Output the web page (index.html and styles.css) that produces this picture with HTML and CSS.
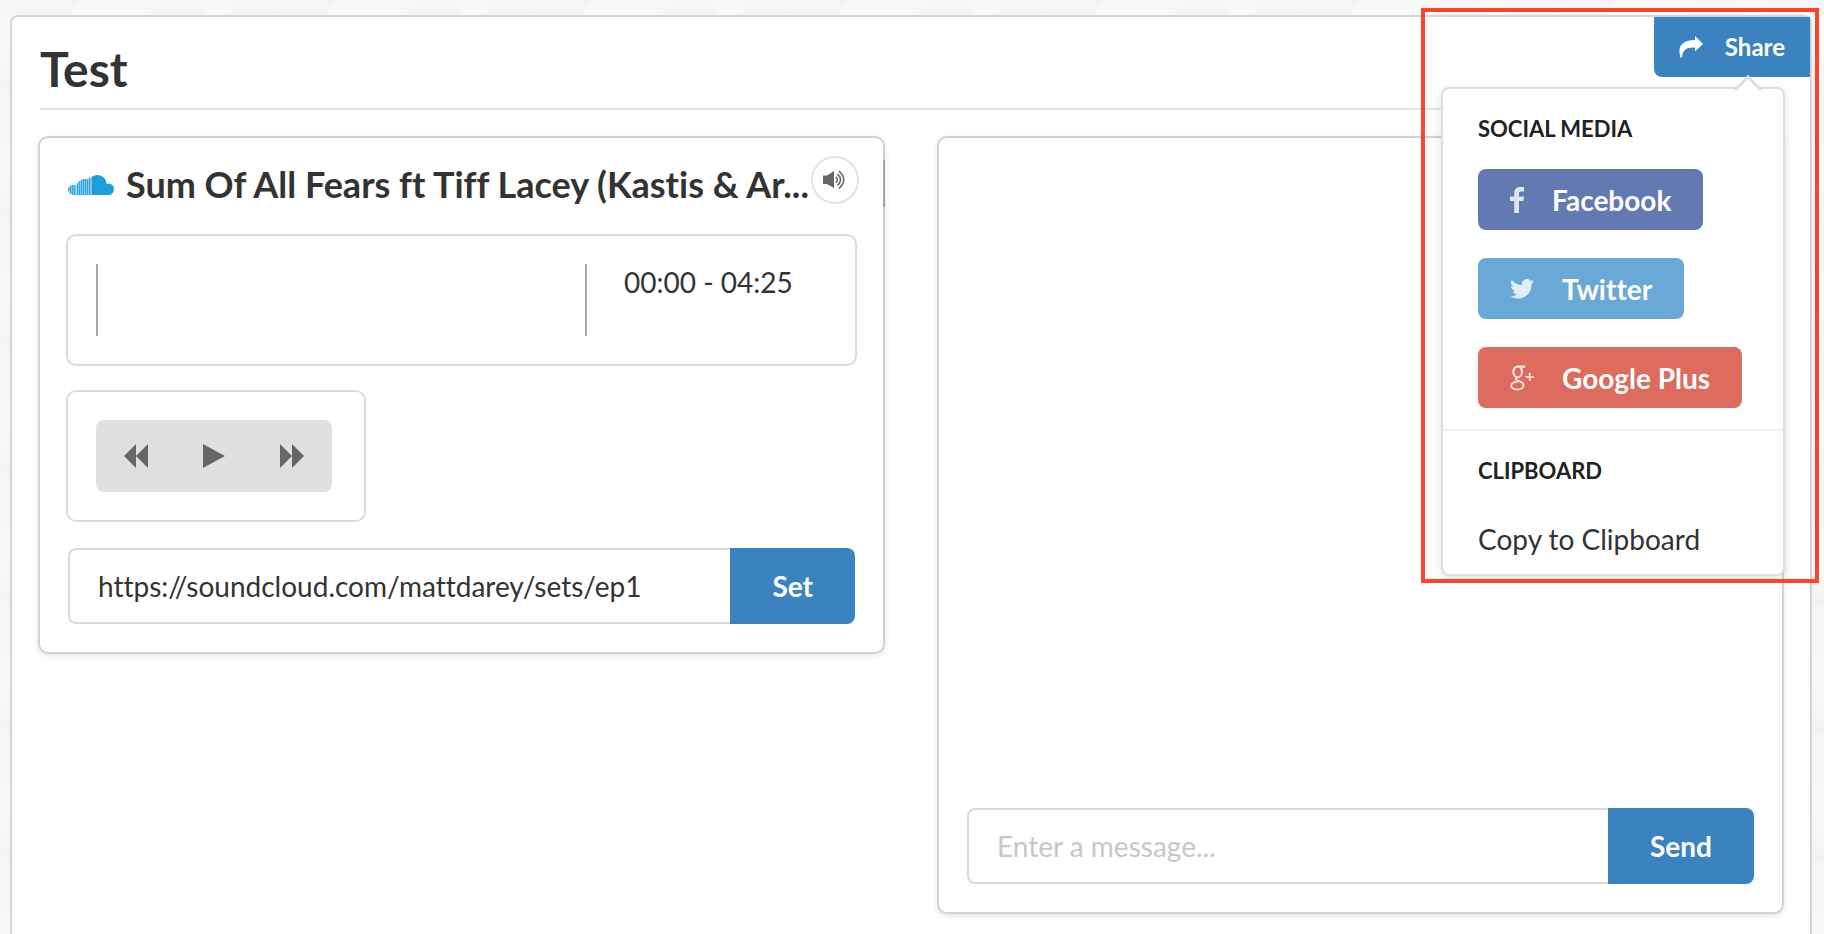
FILE: index.html
```html
<!DOCTYPE html>
<html lang="en">
<head>
<meta charset="utf-8">
<title>Test</title>
<link rel="stylesheet" href="styles.css">
</head>
<body>
<svg class="backdrop" aria-hidden="true">
  <defs>
    <linearGradient id="scale" x1="0" y1="0" x2="0" y2="1">
      <stop offset="0.4" stop-color="#f9f9f9"/>
      <stop offset="1" stop-color="#f2f2f2"/>
    </linearGradient>
    <linearGradient id="petal" x1="0" y1="0" x2="0" y2="1">
      <stop offset="0.5" stop-color="#f6f6f6"/>
      <stop offset="1" stop-color="#fafafa"/>
    </linearGradient>
    <pattern id="scales" width="256" height="128" patternUnits="userSpaceOnUse">
      <rect width="256" height="128" fill="#f5f5f5"/>
      <circle cx="108" cy="32" r="42" fill="url(#scale)"/>
      <circle cx="20" cy="54" r="40" fill="url(#scale)"/>
      <circle cx="222" cy="60" r="34" fill="url(#scale)"/>
      <circle cx="180" cy="76" r="40" fill="url(#scale)"/>
      <circle cx="90" cy="94" r="34" fill="url(#scale)"/>
      <ellipse cx="137" cy="-4" rx="24" ry="22" fill="url(#petal)"/>
      <ellipse cx="218" cy="-4" rx="18" ry="22" fill="url(#petal)"/>
    </pattern>
  </defs>
  <rect width="100%" height="100%" fill="url(#scales)"/>
</svg>
<main class="room">
  <header class="room-header">
    <h1 class="room-title">Test</h1>
    <div class="share">
      <button class="share-button" type="button" aria-expanded="true">
        <svg class="icon-share" viewBox="0 0 24 22" aria-hidden="true"><path d="M16 0 24 8 16 15.500V11.500C8 11 3.500 13.500 3 21.500H1.500C-2 10.500 3 4 16 4Z"/></svg>
        Share
      </button>
      <div class="popup">
        <section class="popup-section">
          <h2 class="popup-title">SOCIAL MEDIA</h2>
          <button class="social facebook" type="button">
            <svg class="icon-facebook" viewBox="0 0 14 26" aria-hidden="true"><path d="M14 0V4.500H11C9.500 4.500 9 5.200 9 6.500V9.500H14L13.400 14H9V26H4.200V14H0V9.500H4.200V6C4.200 2.200 6.500 0 10.300 0Z"/></svg>
            Facebook
          </button>
          <button class="social twitter" type="button">
            <svg class="icon-wide" viewBox="0 0 24 20" aria-hidden="true"><path d="M24 2.400c-.9.400-1.800.7-2.800.8 1-.6 1.800-1.600 2.200-2.700-1 .6-2 1-3.100 1.200A4.900 4.900 0 0 0 11.900 6.200C7.800 6 4.200 4 1.700 1 .4 3.200 1.100 6.100 3.200 7.500c-.8 0-1.600-.2-2.200-.6 0 2.300 1.600 4.400 3.900 4.900-.7.200-1.500.2-2.200.1.600 2 2.400 3.400 4.600 3.400A9.900 9.900 0 0 1 0 17.300C8.400 22.600 21.500 18.200 21.500 5.500v-.6c1-.7 1.800-1.600 2.500-2.500Z"/></svg>
            Twitter
          </button>
          <button class="social google" type="button">
            <svg class="icon-google" viewBox="0 0 25 26" aria-hidden="true"><g fill="none" stroke="currentColor"><ellipse cx="8" cy="6.700" rx="4.500" ry="5.500" stroke-width="2.200"/><path d="M8 .8H16L12 2.500" stroke-width="1.400"/><path d="M8 12.200C4.500 14 6 15.300 10 16.500 16 18.300 15 25 7.500 25-1 25-1 17.200 8.500 16.700" stroke-width="1.900"/><path d="M13.800 18.500Q15 21.500 12.500 23.500" stroke-width="1.600"/><path d="M16 11.800H25M20.500 7.500V16.200" stroke-width="1.700"/></g></svg>
            Google Plus
          </button>
        </section>
        <section class="popup-section clipboard">
          <h2 class="popup-title">CLIPBOARD</h2>
          <button class="copy" type="button">Copy to Clipboard</button>
        </section>
      </div>
    </div>
  </header>
  <div class="columns">
    <section class="card player">
      <div class="track">
        <svg class="icon-cloud" viewBox="0 0 46 20" aria-hidden="true">
          <path d="M23.500 1.800Q28-.8 32.500.5 38 2.500 38.500 8.800 46 7.800 46 14.200 45.500 20 40 20H23.500Z"/>
          <g fill="none" stroke="currentColor" stroke-width="1.200"><path d="M.7 12.500v4M2.700 10.500v8.500M4.700 10v9.700M6.700 10v10M9.700 8V20M11.700 6V20M13.700 5V20M15.700 4V20M17.700 4V20M19.700 4.500V20M21.700 2.500V20"/></g>
          <path d="M0 12.500 3 10.200H8L10 7 14 4H19L23.500 1.800V20H4Q0 18.500 0 15Z" opacity=".35"/>
        </svg>
        <h2 class="track-title">Sum Of All Fears ft Tiff Lacey (Kastis &amp; Ar...</h2>
        <button class="volume" type="button" aria-label="Volume">
          <svg class="icon-volume" viewBox="0 0 24 20" aria-hidden="true"><path d="M0 5.500H4L11 1V18L4 14H0Z"/><g fill="none" stroke="currentColor" stroke-width="1.600"><path d="M12.800 6.800Q16 9.700 12.800 12.700M14.500 4.200Q20.700 9.700 14.500 15.400M16 1.200Q25.500 9.700 16 18.500"/></g></svg>
        </button>
      </div>
      <div class="box progress">
        <div class="wave"></div>
        <span class="time">00:00 - 04:25</span>
      </div>
      <div class="box controls">
        <div class="control-group">
          <button class="control" type="button" aria-label="Previous"><svg class="icon-control" viewBox="0 0 24 24" aria-hidden="true"><path d="M12 0V24L0 12ZM24 0V24L12 12Z"/></svg></button>
          <button class="control" type="button" aria-label="Play"><svg class="icon-control" viewBox="0 0 24 24" aria-hidden="true"><path d="M1 0 23 12 1 24Z"/></svg></button>
          <button class="control" type="button" aria-label="Next"><svg class="icon-control" viewBox="0 0 24 24" aria-hidden="true"><path d="M0 0 12 12 0 24ZM12 0 24 12 12 24Z"/></svg></button>
        </div>
      </div>
      <form class="action-input">
        <input class="field" type="text" aria-label="Track address" value="https://soundcloud.com/mattdarey/sets/ep1">
        <button class="action" type="button">Set</button>
      </form>
    </section>
    <section class="card chat">
      <form class="action-input">
        <input class="field" type="text" aria-label="Message" placeholder="Enter a message...">
        <button class="action" type="button">Send</button>
      </form>
    </section>
  </div>
</main>
<div class="highlight"></div>
</body>
</html>
```

FILE: styles.css
```css
* { box-sizing: border-box; }
html { height: 100%; }
body {
  min-height: 100%;
  margin: 0;
  padding: 15px 12px 0 10px;
  display: flex;
  flex-direction: column;
  position: relative;
  background: #f5f5f5;
  color: #333;
  font: 28px/40px Lato, "Liberation Sans", sans-serif;
  font-variant-ligatures: none;
}
h1, h2 { margin: 0; font-weight: bold; }
button, input { font: inherit; font-variant-ligatures: none; color: inherit; margin: 0; border: 0; }
button { padding: 0; cursor: pointer; background: none; }
svg { display: block; flex: none; fill: currentColor; }

.backdrop { position: absolute; inset: 0; width: 100%; height: 100%; z-index: -1; }

.room {
  flex: 1;
  padding: 0 26px 20px;
  background: #fff;
  border: 2px solid #d4d4d4;
  border-bottom: 0;
  border-radius: 8px 8px 0 0;
}
.room-header {
  display: flex;
  justify-content: space-between;
  align-items: flex-start;
  margin: 0 0 26px 2px;
  border-bottom: 2px solid #e3e3e3;
}
.room-title { padding: 22px 0 9px; font-size: 48px; line-height: 60px; }

.share { position: relative; margin-right: -26px; }
.share-button {
  display: flex;
  align-items: center;
  gap: 22px;
  height: 60px;
  padding: 0 25px;
  background: #3b83c0;
  border-radius: 0 0 0 8px;
  color: #fff;
  font-size: 24px;
  font-weight: bold;
}
.icon-share { width: 24px; height: 22px; }

.popup {
  position: absolute;
  top: 70px;
  right: 25px;
  z-index: 2;
  width: 344px;
  background: #fff;
  border: 2px solid #dedede;
  border-radius: 8px;
  box-shadow: 0 2px 10px rgba(0, 0, 0, .12);
}
.popup::before {
  content: "";
  position: absolute;
  top: -10px;
  right: 25px;
  width: 17px;
  height: 17px;
  background: #fff;
  border: solid rgba(0, 0, 0, .12);
  border-width: 3px 0 0 3px;
  transform: rotate(45deg);
}
.popup-section {
  display: flex;
  flex-direction: column;
  align-items: flex-start;
  gap: 28px;
  padding: 28px 35px 21px;
}
.popup-title { font-size: 22px; line-height: 24px; color: #222; }
.clipboard { border-top: 2px solid #f0f0f0; padding-bottom: 7px; }
.copy { height: 56px; }
.social {
  display: flex;
  align-items: center;
  gap: 28px;
  height: 61px;
  padding: 0 32px;
  border-radius: 8px;
  color: #fff;
  font-weight: bold;
}
.facebook { background: #6379b1; }
.twitter { background: #69a8d7; }
.google { background: #dd6c5f; }
.social svg { opacity: .8; }
.icon-facebook { width: 14px; height: 26px; }
.icon-wide { width: 24px; height: 20px; }
.icon-google { width: 24px; height: 26px; }

.columns { display: grid; grid-template-columns: 1fr 1fr; gap: 52px; align-items: start; }
.card {
  min-width: 0;
  padding: 18px 28px 28px;
  background: #fff;
  border: 2px solid #d2d2d2;
  border-radius: 10px;
  box-shadow: 0 2px 6px rgba(0, 0, 0, .1);
}
.player { position: relative; }
.player::after {
  content: "";
  position: absolute;
  top: 22px;
  right: -2px;
  width: 2px;
  height: 47px;
  background: #a5a5a5;
}
.track { display: flex; align-items: flex-start; margin-bottom: 28px; }
.icon-cloud { width: 46px; height: 20px; margin: 19px 12px 0 0; color: #1c9fdc; }
.track-title {
  flex: 1;
  min-width: 0;
  padding-top: 6px;
  font-size: 36px;
  line-height: 44px;
  white-space: nowrap;
}
.volume {
  display: grid;
  place-items: center;
  width: 48px;
  height: 48px;
  margin-right: -4px;
  border: 2px solid #e3e3e3;
  border-radius: 50%;
  color: #666;
}
.icon-volume { width: 24px; height: 20px; }

.box { margin: 0 -2px; border: 2px solid #dcdcdc; border-radius: 10px; padding: 28px; }
.progress { display: flex; gap: 37px; height: 132px; margin-bottom: 24px; }
.wave { flex: 1; height: 72px; border: solid #aaa; border-width: 0 2px; }
.time { width: 203px; line-height: 36px; }
.controls { width: fit-content; margin-bottom: 26px; padding-right: 32px; }
.control-group { display: flex; padding: 0 1px; background: #e0e0e0; border-radius: 8px; }
.control { display: grid; place-items: center; width: 78px; height: 72px; color: #666; }
.icon-control { width: 24px; height: 24px; }

.action-input { display: flex; }
.field {
  flex: 1;
  min-width: 0;
  height: 76px;
  padding: 0 28px;
  background: #fff;
  border: 2px solid #d9d9d9;
  border-right: 0;
  border-radius: 8px 0 0 8px;
  outline: 0;
}
.field::placeholder { color: #c7c7c7; opacity: 1; }
.action {
  height: 76px;
  padding: 0 42px;
  background: #3b83c0;
  border-radius: 0 8px 8px 0;
  color: #fff;
  font-weight: bold;
}
.chat { display: flex; flex-direction: column; justify-content: flex-end; height: 778px; }

.highlight {
  position: absolute;
  top: 8px;
  right: 5px;
  z-index: 3;
  width: 398px;
  height: 575px;
  border: 4px solid #ff4326;
  pointer-events: none;
}
```
